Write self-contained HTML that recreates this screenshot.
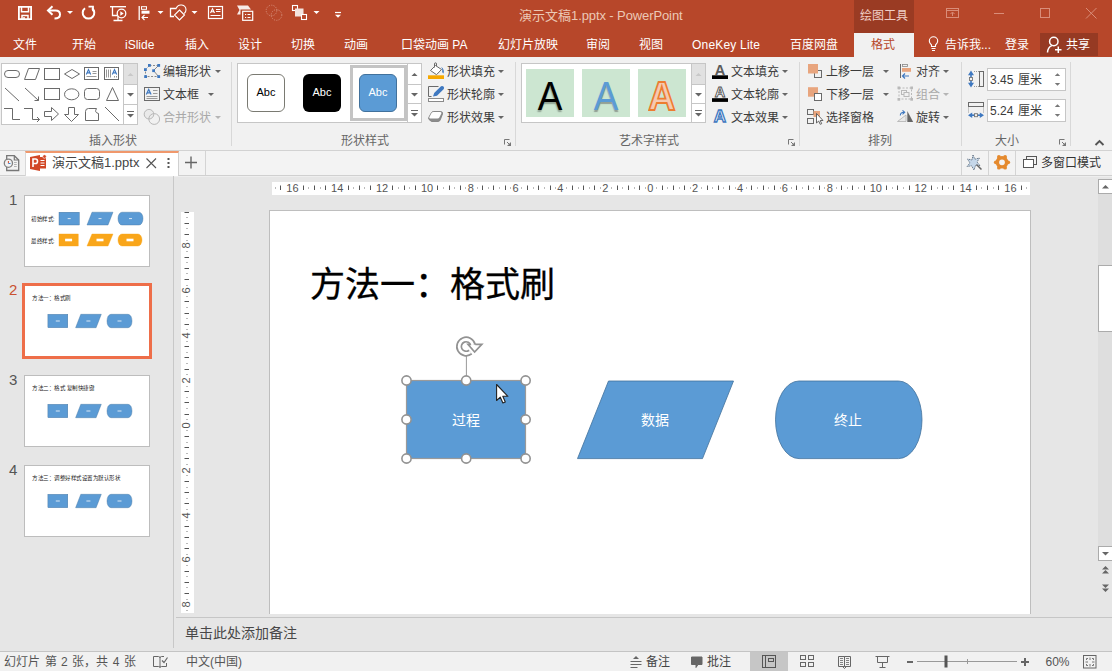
<!DOCTYPE html>
<html lang="zh-CN">
<head>
<meta charset="utf-8">
<title>演示文稿1.pptx - PowerPoint</title>
<style>
*{box-sizing:border-box;margin:0;padding:0}
html,body{width:1112px;height:671px;overflow:hidden;background:#e6e6e6;font-family:"Liberation Sans",sans-serif;font-size:13px;color:#444}
#app{position:relative;width:1112px;height:671px;overflow:hidden}
#app div,#app span,#app svg{position:absolute;white-space:nowrap}
svg{overflow:visible}
#app i{font-style:normal;display:inline-block;width:1em;text-align:center}
#titlebar{left:0;top:0;width:1112px;height:57px;background:#b7472a}
#ctx{left:854px;top:0;width:60px;height:33px;background:#9a3b23;color:#f0cfc6;font-size:12px;line-height:32px;text-align:center}
#title{left:519px;top:0;height:30px;line-height:31px;color:#ecc9b6;font-size:13px;letter-spacing:-.1px}
.tab{top:31px;height:26px;line-height:29px;color:#fff;font-size:12px}
#tabsel{left:854px;top:33px;width:60px;height:24px;padding-right:2px;background:#f1f1f1;color:#b7472a;text-align:center;line-height:25px;font-size:12px}
#share{left:1040px;top:33px;width:58px;height:23px;background:#963a23}
#ribbon{left:0;top:57px;width:1112px;height:94px;background:#f1f1f1;border-bottom:1px solid #d2d2d2}
.gl{top:133px;font-size:12px;color:#666;height:16px;line-height:16px;text-align:center}
.sep{top:62px;width:1px;height:84px;background:#d8d8d8}
.rt{font-size:12px;color:#3b3b3b;height:20px;line-height:20px}
.dis{color:#a9a9a9}
.gal{background:#fff;border:1px solid #c6c6c6}
.dd{width:0;height:0;border-left:3px solid transparent;border-right:3px solid transparent;border-top:3px solid #666}
#doctabs{left:0;top:150px;width:1112px;height:26px;background:#f3f3f3;border-bottom:1px solid #d0d0d0}
#work{left:0;top:176px;width:1112px;height:475px;background:#e6e6e6}
#status{left:0;top:651px;width:1112px;height:20px;background:#f1f1f1;border-top:1px solid #c6c6c6}
.st{top:1px;height:19px;line-height:19px;font-size:12px;color:#555}
</style>
</head>
<body>
<div id="app">
<div id="titlebar"></div>
<div id="share"></div>
<div id="ctx"><i>绘</i><i>图</i><i>工</i><i>具</i></div>
<div id="title"><i>演</i><i>示</i><i>文</i><i>稿</i>1.pptx - PowerPoint</div>
<svg style="left:0;top:0" width="1112" height="57" fill="none" stroke="#fff" stroke-width="1.3"><path d="M18.900 6.900H31.100V19.100H18.900Z" stroke-width="1.800"/><path d="M21.500 7V11.800H28.500V7" stroke-width="1.500"/><path d="M22 19V15.500H28V19" stroke-width="1.500"/><path d="M24 17V19" stroke-width="1.500"/><path d="M52.500 6.300L48 10.500L52.500 14.700" stroke-width="2"/><path d="M48.500 10.500H55.500Q60 10.500 60 14.500Q60 18.500 54.500 18.500" stroke-width="2"/><path d="M67 11H73L70 14Z" fill="#fff" stroke="none"/><path d="M92 8.200A5.800 5.800 0 1 1 85 8.200" stroke-width="2"/><path d="M88.500 6.700H93V11.200" stroke-width="1.800"/><path d="M110 6.700H126" stroke-width="1.4"/><path d="M112.500 7V15.500H117"/><path d="M118 16V20M113.500 20.500H122.500"/><circle cx="121.500" cy="13.500" r="4.300"/><path d="M120.300 11.300L123.700 13.500L120.300 15.700Z" fill="#fff" stroke="none"/><path d="M139.200 6V20"/><rect x="141.500" y="6.700" width="5" height="2.600" stroke-width="1"/><rect x="141.500" y="10.700" width="8" height="3" fill="#fff" stroke="none"/><path d="M142 17.500H148M144.500 15L142 17.500L144.500 20" stroke-width="1.1"/><path d="M157.500 11H163.500L160.500 14Z" fill="#fff" stroke="none"/><path d="M176.500 8.500H170.500V16.500H174"/><path d="M176.300 8.300A5 5 0 0 1 186 9.800A5 5 0 0 1 184.300 13.500" stroke-width="1.100"/><path d="M179.500 10L184.500 15L179.500 20L174.500 15Z" stroke-width="1.1"/><path d="M191.500 11H197.500L194.500 14Z" fill="#fff" stroke="none"/><rect x="208.500" y="6.500" width="14" height="12" stroke-width="1.2"/><path d="M216 9.500H220.500M216 11.500H220.500M210.500 15.500H220.500" stroke-width="1"/><path d="M210.500 13L212.500 8.800L214.500 13M211.300 11.700H213.700" stroke-width="1.1"/><path d="M237 5.500H248L251 9.500H240.500V14.500H237L239.500 10Z" fill="#f7ebe7" stroke="none"/><rect x="242.700" y="11.300" width="10" height="9" stroke-width="1.2"/><path d="M245 14.500H246.200M247.500 14.500H250.500M245 17.500H246.200M247.500 17.500H250.500" stroke-width="1"/><circle cx="271.500" cy="10.500" r="5.300" stroke="#d58a76" stroke-dasharray="1.200 1.200" stroke-width="1"/><circle cx="276.500" cy="15" r="5.300" stroke="#d58a76" stroke-dasharray="1.200 1.200" stroke-width="1"/><rect x="292.500" y="5.500" width="5" height="5" stroke-width="1.1"/><rect x="295" y="8.500" width="8.500" height="8" fill="#f3e3de" stroke="none"/><rect x="301.500" y="14.500" width="5" height="5" fill="#b7472a" stroke-width="1.100"/><path d="M313.500 11H319.500L316.500 14Z" fill="#fff" stroke="none"/><path d="M335 12.500H341" stroke-width="1.2"/><path d="M335 14.800H341L338 17.800Z" fill="#fff" stroke="none"/><rect x="946.500" y="8.500" width="12" height="9" stroke="#d98d79" stroke-width="1"/><path d="M946.500 10.500H958.500M952.500 16V12.500M950.500 14L952.500 12L954.500 14" stroke="#d98d79" stroke-width="1"/><path d="M994 13.500H1004" stroke="#d98d79" stroke-width="1"/><rect x="1040.500" y="8.500" width="9" height="9" stroke="#d98d79" stroke-width="1"/><path d="M1086 8L1096.500 18.500M1096.500 8L1086 18.500" stroke="#d98d79" stroke-width="1"/><path d="M931.500 46.500V45Q929.300 43.200 929.300 41A4.200 4.200 0 0 1 937.700 41Q937.700 43.200 935.500 45V46.500Z" stroke-width="1.1"/><path d="M931.500 48.500H935.500M932 50.500H935" stroke-width="1.100"/><circle cx="1053.800" cy="41.500" r="4.200" stroke-width="1.500"/><path d="M1047.500 52.500Q1047.800 47 1052 45.600" stroke-width="1.500"/><path d="M1058.300 46.500V53M1055 49.700H1061.500" stroke-width="1.500"/></svg>
<div class="tab" style="left:13px"><i>文</i><i>件</i></div>
<div class="tab" style="left:72px"><i>开</i><i>始</i></div>
<div class="tab" style="left:125px">iSlide</div>
<div class="tab" style="left:185px"><i>插</i><i>入</i></div>
<div class="tab" style="left:238px"><i>设</i><i>计</i></div>
<div class="tab" style="left:291px"><i>切</i><i>换</i></div>
<div class="tab" style="left:344px"><i>动</i><i>画</i></div>
<div class="tab" style="left:401px"><i>口</i><i>袋</i><i>动</i><i>画</i> PA</div>
<div class="tab" style="left:498px"><i>幻</i><i>灯</i><i>片</i><i>放</i><i>映</i></div>
<div class="tab" style="left:586px"><i>审</i><i>阅</i></div>
<div class="tab" style="left:639px"><i>视</i><i>图</i></div>
<div class="tab" style="left:692px"><span style="position:static;letter-spacing:.2px">OneKey Lite</span></div>
<div class="tab" style="left:790px"><i>百</i><i>度</i><i>网</i><i>盘</i></div>
<div id="tabsel"><i>格</i><i>式</i></div>
<div class="tab" style="left:945px"><i>告</i><i>诉</i><i>我</i>...</div>
<div class="tab" style="left:1005px"><i>登</i><i>录</i></div>
<div class="tab" style="left:1066px"><i>共</i><i>享</i></div>
<div id="ribbon"></div>
<div class="gal" style="left:1px;top:63px;width:137px;height:62px"></div>
<div style="left:123px;top:64px;width:14px;height:20px;background:#e1e1e1"></div>
<div style="left:123px;top:63px;width:1px;height:62px;background:#c6c6c6"></div>
<div style="left:123px;top:84px;width:15px;height:1px;background:#c6c6c6"></div>
<div style="left:123px;top:104px;width:15px;height:1px;background:#c6c6c6"></div>
<svg style="left:0;top:0" width="240" height="150" fill="none" stroke="#6a6a6a" stroke-width="1"><rect x="4.5" y="70.5" width="15" height="7" rx="3.5"/><path d="M28.5 68.5H39.5L35.5 79.5H24.5Z"/><rect x="44.5" y="68.5" width="15" height="11"/><path d="M64.5 74L72 69.5L79.5 74L72 78.5Z"/><rect x="84.5" y="67.5" width="14" height="12"/><path d="M92.5 71.5H96.5M92.5 73.5H96.5M86.500 76.5H96.5" stroke="#999"/><path d="M86.3 74.500L88.5 69.500L90.7 74.500M87.2 72.900H89.8" stroke="#3e78c0" stroke-width="1.1"/><rect x="104.5" y="67.5" width="14" height="12"/><path d="M106.5 69.5V77.5M108.5 69.5V77.5M110.5 69.5V77.5M114.5 76V77.5M116.5 76V77.5" stroke="#999"/><path d="M112.3 74.500L114.5 69.500L116.7 74.500M113.2 72.900H115.8" stroke="#3e78c0" stroke-width="1.1"/><path d="M5 88L19 101"/><path d="M25 88L38.500 100.5M34.5 100.5H38.5V96.5"/><rect x="44.5" y="88.5" width="15" height="11"/><ellipse cx="71.700" cy="94.300" rx="7.2" ry="5.5"/><rect x="84.5" y="88.5" width="15" height="11" rx="3"/><path d="M106.5 100.5L112.500 87.500L118.5 100.5Z"/><path d="M4 108.500H12.500V119.500H20"/><path d="M24 108.500H32.500V119.500H39.500M37 117L39.500 119.500L37 122"/><path d="M44.500 111.500H51.500V107.500L58.500 114L51.500 120.500V116.500H44.500Z"/><path d="M68.500 107.500H74.500V114.500H78.500L71.500 121.500L64.500 114.500H68.500Z"/><path d="M85.500 120.500V111.500Q85.500 108.500 88.500 108.500H96.500Q94 112.500 98.500 113.500V120.500Z"/><path d="M105 107L119 121"/><path d="M127.500 76L130.500 73L133.500 76Z" fill="#c8c8c8" stroke="none"/><path d="M127 93H134L130.500 96.500Z" fill="#666" stroke="none"/><path d="M127 111.500H134" stroke="#666"/><path d="M127 114H134L130.500 117.500Z" fill="#666" stroke="none"/></svg>
<svg style="left:0;top:0" width="240" height="150" fill="none"><path d="M149.500 65.500H158.500M149 66L145.500 69.500V76.500H158.500" stroke="#8a8a8a" stroke-dasharray="2 1.500"/><path d="M158.500 65.500L153.500 70.500L158.500 76.500" stroke="#8a8a8a"/><rect x="148" y="64" width="2.800" height="2.800" fill="#3e78c0"/><rect x="157.3" y="64" width="2.800" height="2.800" fill="#3e78c0"/><rect x="144" y="68.2" width="2.800" height="2.800" fill="#3e78c0"/><rect x="152.2" y="69.3" width="2.800" height="2.800" fill="#3e78c0"/><rect x="144.2" y="75.2" width="2.800" height="2.800" fill="#3e78c0"/><rect x="157.3" y="75.2" width="2.800" height="2.800" fill="#3e78c0"/><rect x="144.500" y="87.500" width="15" height="13" stroke="#6a6a6a"/><path d="M153 90.500H157.500M153 93.500H157.500M146.500 96.500H157.500M146.500 98.500H157.500" stroke="#999"/><path d="M146.300 94.500L148.700 89.500L151.100 94.500M147.200 92.800H150.200" stroke="#3e78c0" stroke-width="1.2"/><circle cx="149" cy="114.200" r="4.800" stroke="#b8b8b8" fill="#eaeaea"/><circle cx="154.200" cy="119" r="5.400" stroke="#b8b8b8" fill="none"/></svg>
<div class="rt" style="left:163px;top:62px"><i>编</i><i>辑</i><i>形</i><i>状</i></div><div class="dd" style="left:215px;top:70px"></div>
<div class="rt" style="left:163px;top:85px"><i>文</i><i>本</i><i>框</i></div><div class="dd" style="left:208px;top:93px"></div>
<div class="rt dis" style="left:163px;top:108px"><i>合</i><i>并</i><i>形</i><i>状</i></div><div class="dd" style="left:215px;top:116px;border-top-color:#b5b5b5"></div>
<div class="gl" style="left:63px;width:100px"><i>插</i><i>入</i><i>形</i><i>状</i></div>
<div class="sep" style="left:231px"></div>
<div class="gal" style="left:237px;top:63px;width:185px;height:60px"></div>
<div style="left:407px;top:63px;width:1px;height:60px;background:#c6c6c6"></div>
<div style="left:407px;top:84px;width:15px;height:1px;background:#c6c6c6"></div>
<div style="left:407px;top:103px;width:15px;height:1px;background:#c6c6c6"></div>
<div style="left:350px;top:65px;width:57px;height:56px;border:3px solid #c4c4c4;background:#fff"></div>
<div style="left:247px;top:74px;width:38px;height:38px;border:1px solid #7a7a72;border-radius:6px;background:#fff;color:#000;font-size:11px;line-height:34px;text-align:center">Abc</div>
<div style="left:303px;top:74px;width:38px;height:38px;border-radius:6px;background:#000;color:#fff;font-size:11px;line-height:36px;text-align:center">Abc</div>
<div style="left:359px;top:74px;width:38px;height:38px;border:1px solid #41719c;border-radius:6px;background:#5b9bd5;color:#fff;font-size:11px;line-height:34px;text-align:center">Abc</div>
<svg style="left:0;top:0" width="1112" height="150" fill="none"><path d="M411.500 76L414.500 73L417.500 76Z" fill="#666"/><path d="M411 93H418L414.500 96.500Z" fill="#666"/><path d="M411 110.500H418" stroke="#666"/><path d="M411 113H418L414.500 116.500Z" fill="#666"/><path d="M430.500 70.500L435.500 65.500L441.500 69.500L436.500 74.700Z" stroke="#6a6a6a" fill="#fff"/><path d="M434.500 67.500V64Q434.500 62.800 435.500 62.800Q436.500 62.800 436.500 64V66" stroke="#6a6a6a"/><path d="M441.300 67Q444.800 69.500 443.500 73.500Q441.800 73 442.300 69.800Z" fill="#3e78c0"/><rect x="428" y="75.300" width="16" height="3.700" fill="#f6a800"/><path d="M438.500 86.500H428.500V96.500H431.500" stroke="#6a6a6a"/><rect x="428.500" y="98.500" width="15" height="3" fill="#fff" stroke="#8a8a8a"/><path d="M433 96.500L434.200 93L441 86.200Q442.500 85.500 443.500 86.500Q444.500 87.500 443.800 89L437 95.800Z" fill="#3e78c0"/><path d="M429 119.500Q428 118.500 429 117L431.500 112.500Q432.200 111.500 433.500 111.500H440.500Q443 111.500 442.500 114L440.300 119.800Q439.800 121.500 438 121.500H431.500Z" fill="#8c8c8c" stroke="#7a7a7a" stroke-width="0.800"/><path d="M429.300 117.200L431.700 112.800Q432.200 112 433.500 112H440.200Q442 112 441.300 113.500L439.300 117.500Q438.800 118.500 437.500 118.500H430.300Q428.800 118.500 429.300 117.200Z" fill="#fff"/><path d="M504.500 144.500V139.500H509.500" stroke="#777"/><path d="M507 142L510 145" stroke="#777"/><path d="M511 142V146H507Z" fill="#777"/><path d="M788.500 144.500V139.500H793.500" stroke="#777"/><path d="M791 142L794 145" stroke="#777"/><path d="M795 142V146H791Z" fill="#777"/><path d="M1059.500 144.500V139.500H1064.500" stroke="#777"/><path d="M1062 142L1065 145" stroke="#777"/><path d="M1066 142V146H1062Z" fill="#777"/></svg>
<div class="rt" style="left:447px;top:62px"><i>形</i><i>状</i><i>填</i><i>充</i></div><div class="dd" style="left:498px;top:70px"></div>
<div class="rt" style="left:447px;top:85px"><i>形</i><i>状</i><i>轮</i><i>廓</i></div><div class="dd" style="left:498px;top:93px"></div>
<div class="rt" style="left:447px;top:108px"><i>形</i><i>状</i><i>效</i><i>果</i></div><div class="dd" style="left:498px;top:116px"></div>
<div class="gl" style="left:315px;width:100px"><i>形</i><i>状</i><i>样</i><i>式</i></div>
<div class="sep" style="left:515px"></div>
<div class="gal" style="left:521px;top:63px;width:185px;height:60px"></div>
<div style="left:692px;top:64px;width:13px;height:20px;background:#e1e1e1"></div>
<div style="left:691px;top:63px;width:1px;height:60px;background:#c6c6c6"></div>
<div style="left:691px;top:84px;width:15px;height:1px;background:#c6c6c6"></div>
<div style="left:691px;top:103px;width:15px;height:1px;background:#c6c6c6"></div>
<div style="left:526px;top:69px;width:48px;height:48px;background:#cce6d1"></div>
<div style="left:582px;top:69px;width:48px;height:48px;background:#cce6d1"></div>
<div style="left:638px;top:69px;width:48px;height:48px;background:#cce6d1"></div>
<div style="left:526px;top:69px;width:48px;height:48px;text-align:center;font-size:41px;line-height:54px;transform:scaleX(.9);color:#000;text-shadow:-.5px 1.5px 1.5px rgba(0,0,0,.3)">A</div>
<div style="left:582px;top:69px;width:48px;height:48px;text-align:center;font-size:41px;line-height:54px;transform:scaleX(.9);color:#5b9bd5;text-shadow:0 1.5px 1px rgba(90,90,90,.5)">A</div>
<div style="left:638px;top:69px;width:48px;height:48px;text-align:center;font-size:41px;line-height:54px;transform:scaleX(.92);font-weight:bold;color:#f6c9b0;-webkit-text-stroke:1.800px #ed7d31">A</div>
<svg style="left:0;top:0" width="1112" height="150" fill="none"><path d="M695.500 76L698.500 73L701.500 76Z" fill="#c8c8c8"/><path d="M695 93H702L698.500 96.500Z" fill="#666"/><path d="M695 110.500H702" stroke="#666"/><path d="M695 113H702L698.500 116.500Z" fill="#666"/><text x="720" y="75" text-anchor="middle" font-size="14.500" font-weight="bold" fill="#5c5c5c">A</text><rect x="712" y="75.300" width="16" height="3.700" fill="#000"/><text x="720" y="97" text-anchor="middle" font-size="14.500" font-weight="bold" fill="#fff" stroke="#555" stroke-width=".9">A</text><rect x="712" y="98.200" width="16" height="3.700" fill="#000"/><text x="720" y="122.300" text-anchor="middle" font-size="17" font-weight="bold" fill="#fff" stroke="#3e78c0" stroke-width="1.300">A</text></svg>
<div class="rt" style="left:731px;top:62px"><i>文</i><i>本</i><i>填</i><i>充</i></div><div class="dd" style="left:782px;top:70px"></div>
<div class="rt" style="left:731px;top:85px"><i>文</i><i>本</i><i>轮</i><i>廓</i></div><div class="dd" style="left:782px;top:93px"></div>
<div class="rt" style="left:731px;top:108px"><i>文</i><i>本</i><i>效</i><i>果</i></div><div class="dd" style="left:782px;top:116px"></div>
<div class="gl" style="left:599px;width:100px"><i>艺</i><i>术</i><i>字</i><i>样</i><i>式</i></div>
<div class="sep" style="left:799px"></div>
<div style="left:987px;top:68px;width:79px;height:23px;background:#fff;border:1px solid #c6c6c6"></div>
<div style="left:987px;top:99px;width:79px;height:23px;background:#fff;border:1px solid #c6c6c6"></div>
<svg style="left:0;top:0" width="1112" height="150" fill="none"><rect x="814.500" y="70.500" width="7" height="7" stroke="#6a6a6a" fill="#f1f1f1"/><rect x="808" y="64" width="10" height="9.500" fill="#e8a57e"/><rect x="808" y="87.200" width="10" height="9.500" fill="#e8a57e"/><rect x="814.500" y="93.500" width="7" height="7" stroke="#6a6a6a" fill="#fff"/><rect x="807.500" y="109.500" width="6" height="5" stroke="#6a6a6a"/><rect x="807.500" y="118.500" width="6" height="5" stroke="#6a6a6a"/><rect x="813.500" y="111" width="6.500" height="6" fill="#e8a57e"/><path d="M816.500 113.500V123L818.700 121L820.200 124.300L821.700 123.700L820.200 120.500H823Z" fill="#fff" stroke="#555" stroke-width="0.900"/><path d="M900.500 64V78" stroke="#6a6a6a"/><rect x="902.500" y="64.500" width="5" height="2" stroke="#888" stroke-width=".8"/><rect x="902" y="68" width="9" height="3.800" fill="#e8a57e"/><path d="M902.500 76H909M905 73.500L902.500 76L905 78.500" stroke="#3e78c0" stroke-width="1.200"/><rect x="899" y="88" width="12.500" height="11" stroke="#b9b9b9" stroke-dasharray="2 1.500"/><rect x="901.500" y="90.500" width="5" height="4" stroke="#b9b9b9"/><rect x="904" y="92.500" width="5" height="4" stroke="#b9b9b9" fill="#f1f1f1"/><rect x="897.5" y="86.5" width="2.700" height="2.700" fill="#b9b9b9"/><rect x="910.3" y="86.5" width="2.700" height="2.700" fill="#b9b9b9"/><rect x="897.5" y="98" width="2.700" height="2.700" fill="#b9b9b9"/><rect x="910.3" y="98" width="2.700" height="2.700" fill="#b9b9b9"/><path d="M906 115L906 121.500H897.500Z" stroke="#b0b0b0" fill="#e9e9e9" stroke-width=".8"/><path d="M907.300 111L913.200 122H907.300Z" fill="#666"/><path d="M900.300 115.500Q900.300 112.500 904 112.300M902.500 110.300L904.700 112.300L902.500 114.300" stroke="#3e78c0" stroke-width="1.100"/><rect x="979.500" y="71.500" width="4" height="15" stroke="#6a6a6a"/><path d="M974 71.500H979M974 86.500H979" stroke="#999" stroke-dasharray="1 1"/><path d="M968 75.200L971 70.600L974 75.200ZM968 82.800L971 87.400L974 82.800Z" fill="#3e78c0"/><path d="M971 75V83" stroke="#3e78c0" stroke-width="1.600"/><rect x="969.500" y="77.500" width="3" height="3" fill="#f1f1f1" stroke="#777" stroke-width=".9"/><rect x="968.500" y="102.500" width="15" height="4" stroke="#6a6a6a"/><path d="M968.500 107.500V112.500M983.500 107.500V112.500" stroke="#999" stroke-dasharray="1 1"/><path d="M972.200 112.500L968 115.200L972.200 118ZM979.800 112.500L984 115.200L979.800 118Z" fill="#3e78c0"/><path d="M972 115.200H980" stroke="#3e78c0" stroke-width="1.600"/><rect x="974.500" y="113.700" width="3" height="3" fill="#f1f1f1" stroke="#777" stroke-width=".9"/><path d="M1054.800 76.1H1060.200L1057.500 73.3Z" fill="#777"/><path d="M1054.800 83.0H1060.200L1057.500 85.8Z" fill="#777"/><path d="M1054.800 107.1H1060.200L1057.500 104.3Z" fill="#777"/><path d="M1054.800 114.0H1060.200L1057.500 116.8Z" fill="#777"/><path d="M1095.500 145L1099.500 141L1103.500 145" stroke="#555" stroke-width="1.900"/></svg>
<div class="rt" style="left:826px;top:62px"><i>上</i><i>移</i><i>一</i><i>层</i></div>
<div class="rt" style="left:826px;top:85px"><i>下</i><i>移</i><i>一</i><i>层</i></div>
<div class="rt" style="left:826px;top:108px"><i>选</i><i>择</i><i>窗</i><i>格</i></div>
<div class="dd" style="left:883px;top:70px"></div><div class="dd" style="left:883px;top:93px"></div>
<div class="rt" style="left:916px;top:62px"><i>对</i><i>齐</i></div><div class="dd" style="left:943px;top:70px"></div>
<div class="rt dis" style="left:916px;top:85px"><i>组</i><i>合</i></div><div class="dd" style="left:943px;top:93px;border-top-color:#b5b5b5"></div>
<div class="rt" style="left:916px;top:108px"><i>旋</i><i>转</i></div><div class="dd" style="left:943px;top:116px"></div>
<div class="gl" style="left:830px;width:100px"><i>排</i><i>列</i></div>
<div class="sep" style="left:961px"></div>
<div class="rt" style="left:990px;top:70px;word-spacing:1px">3.45 <i>厘</i><i>米</i></div>
<div class="rt" style="left:990px;top:101px;word-spacing:1px">5.24 <i>厘</i><i>米</i></div>
<div class="gl" style="left:957px;width:100px"><i>大</i><i>小</i></div>
<div class="sep" style="left:1070px"></div>
<div style="left:0;top:151px;width:1112px;height:25px;background:#f3f3f3;border-bottom:1px solid #d0d0d0"></div>
<div style="left:25px;top:151px;width:154px;height:25px;background:#fff;border-top:2px solid #f0986c;border-right:1px solid #d0d0d0;border-left:1px solid #d8d8d8"></div>
<div style="left:205px;top:151px;width:1px;height:24px;background:#d4d4d4"></div>
<div style="left:961px;top:151px;width:1px;height:24px;background:#d4d4d4"></div>
<div style="left:988px;top:151px;width:1px;height:24px;background:#d4d4d4"></div>
<div style="left:1015px;top:151px;width:1px;height:24px;background:#d4d4d4"></div>
<div style="left:52px;top:153px;height:20px;line-height:20px;font-size:13px;color:#444"><i>演</i><i>示</i><i>文</i><i>稿</i>1.pptx</div>
<div style="left:1041px;top:153px;height:20px;line-height:21px;font-size:12px;color:#333"><i>多</i><i>窗</i><i>口</i><i>模</i><i>式</i></div>
<svg style="left:0;top:0" width="1112" height="180" fill="none"><path d="M6.700 159.500V155.700H14.300L18.700 160V170.500H6.700V167" stroke="#777" stroke-width="1.300"/><path d="M14.300 155.700V160H18.700" stroke="#777" stroke-width="1.200"/><path d="M14 162.500H16.800M14 164.500H16.800M14 166.500H16.800" stroke="#b5b5b5"/><circle cx="8.400" cy="163.200" r="4.100" fill="#f3f3f3" stroke="#808080" stroke-width="1.300"/><path d="M8.400 161V163.500" stroke="#d8502d" stroke-width="1"/><path d="M8.400 163.500H10.500" stroke="#3e8ad8" stroke-width="1"/><rect x="37" y="157" width="9" height="11.500" fill="#d24726"/><path d="M30 157L40 155V171L30 169Z" fill="#d24726"/><path d="M40.500 160.500H44.500M40.500 163H44.500M40.500 165.500H44.500" stroke="#fff" stroke-width="1"/><path d="M33 167V159H35.500Q37.500 159 37.500 161.200Q37.500 163.500 35.500 163.500H33" stroke="#fff" stroke-width="1.600"/><circle cx="44.500" cy="156.500" r="1.800" fill="#d24726" stroke="#fff" stroke-width=".6"/><path d="M146.500 158.500L156 168M156 158.500L146.500 168" stroke="#555" stroke-width="1.100"/><rect x="167.500" y="158" width="2" height="2" fill="#555"/><rect x="167.500" y="162" width="2" height="2" fill="#555"/><rect x="167.500" y="166" width="2" height="2" fill="#555"/><path d="M185 162.500H197M191 156.500V168.500" stroke="#666" stroke-width="1.400"/><path d="M973 155L974.800 159.200L979.500 158L977 162L980 165.500L975.500 165.500L974 170L971.500 165.800L967 166.500L970 163L967.500 159L972 160Z" fill="#c5d7ea" stroke="#5f6f80" stroke-width=".9" stroke-dasharray="1.500 .8"/><path d="M976.500 164.500L981.500 169.500" stroke="#666" stroke-width="1.500"/><circle cx="1002" cy="162.300" r="4.600" stroke="#e58a2e" stroke-width="3.400"/><circle cx="1008.2" cy="162.3" r="1.900" fill="#e58a2e"/><circle cx="1005.1" cy="167.7" r="1.900" fill="#e58a2e"/><circle cx="998.9" cy="167.7" r="1.900" fill="#e58a2e"/><circle cx="995.8" cy="162.3" r="1.900" fill="#e58a2e"/><circle cx="998.9" cy="156.9" r="1.900" fill="#e58a2e"/><circle cx="1005.1" cy="156.9" r="1.900" fill="#e58a2e"/><rect x="1026.500" y="156.500" width="10" height="8" fill="#f3f3f3" stroke="#555"/><rect x="1023.500" y="159.500" width="10" height="8" fill="#fff" stroke="#555"/></svg>
<div style="left:0;top:176px;width:1112px;height:1px;background:#eeeeee"></div>
<div style="left:173px;top:176px;width:1px;height:472px;background:#c8c8c8"></div>
<div style="left:24px;top:195px;width:126px;height:72px;background:#fff;border:1px solid #bdbdbd"></div>
<div style="left:9px;top:189.7px;font-size:15px;line-height:20px;color:#555">1</div>
<div style="left:22px;top:283px;width:130px;height:76px;background:#fff;border:3px solid #ee6e49"></div>
<div style="left:9px;top:279.7px;font-size:15px;line-height:20px;color:#c9502f">2</div>
<div style="left:24px;top:375px;width:126px;height:72px;background:#fff;border:1px solid #bdbdbd"></div>
<div style="left:9px;top:369.7px;font-size:15px;line-height:20px;color:#555">3</div>
<div style="left:24px;top:465px;width:126px;height:72px;background:#fff;border:1px solid #bdbdbd"></div>
<div style="left:9px;top:459.7px;font-size:15px;line-height:20px;color:#555">4</div>
<div style="left:31px;top:216px;font-size:12px;line-height:12px;height:12px;color:#222;transform:scale(.46);transform-origin:0 0"><i>初</i><i>始</i><i>样</i><i>式</i>:</div>
<div style="left:31px;top:237.5px;font-size:12px;line-height:12px;height:12px;color:#222;transform:scale(.46);transform-origin:0 0"><i>最</i><i>终</i><i>样</i><i>式</i>:</div>
<div style="left:32px;top:294.8px;font-size:12px;line-height:12px;height:12px;color:#222;transform:scale(.46);transform-origin:0 0"><i>方</i><i>法</i><i>一</i><i>：</i><i>格</i><i>式</i><i>刷</i></div>
<div style="left:32px;top:384.8px;font-size:12px;line-height:12px;height:12px;color:#222;transform:scale(.46);transform-origin:0 0"><i>方</i><i>法</i><i>二</i><i>：</i><i>格</i><i>式</i> <i>复</i><i>制</i><i>快</i><i>捷</i><i>键</i></div>
<div style="left:32px;top:474.8px;font-size:12px;line-height:12px;height:12px;color:#222;transform:scale(.46);transform-origin:0 0"><i>方</i><i>法</i><i>三</i><i>：</i><i>调</i><i>整</i><i>好</i><i>样</i><i>式</i><i>设</i><i>置</i><i>为</i><i>默</i><i>认</i><i>形</i><i>状</i></div>
<svg style="left:0;top:0" width="180" height="671" fill="none"><rect x="59" y="212.2" width="20.3" height="12.8" fill="#5b9bd5" stroke="#41719c" stroke-width=".4"/><path d="M87 225.0L92 212.2H113L108 225.0Z" fill="#5b9bd5" stroke="#41719c" stroke-width=".4"/><path d="M122 212.2H139A4 6.4 0 0 1 139 225.0H122A4 6.4 0 0 1 122 212.2Z" fill="#5b9bd5" stroke="#41719c" stroke-width=".4"/><rect x="59" y="234" width="19.2" height="12" fill="#f9a61a" stroke="#f9a61a" stroke-width=".4"/><path d="M87 246L92 234H113L108 246Z" fill="#f9a61a" stroke="#f9a61a" stroke-width=".4"/><path d="M122 234H138A4 6.0 0 0 1 138 246H122A4 6.0 0 0 1 122 234Z" fill="#f9a61a" stroke="#f9a61a" stroke-width=".4"/><path d="M67.7 218.600H70.7" stroke="#dbe8f5" stroke-width="1"/><path d="M98.5 218.600H101.5" stroke="#dbe8f5" stroke-width="1"/><path d="M129.0 218.600H132.0" stroke="#dbe8f5" stroke-width="1"/><path d="M65.1 240H72.1" stroke="#fff" stroke-width="2.600"/><path d="M96.5 240H103.5" stroke="#fff" stroke-width="2.600"/><path d="M126.5 240H133.5" stroke="#fff" stroke-width="2.600"/><rect x="47.9" y="314.3" width="19.9" height="13.4" fill="#5b9bd5" stroke="#41719c" stroke-width=".4"/><path d="M75.6 327.7L80.8 314.3H101.3L96.1 327.7Z" fill="#5b9bd5" stroke="#41719c" stroke-width=".4"/><path d="M111 314.3H128A4 6.700 0 0 1 128 327.7H111A4 6.700 0 0 1 111 314.3Z" fill="#5b9bd5" stroke="#41719c" stroke-width=".4"/><path d="M55.8 321.0H59.8" stroke="#dbe8f5" stroke-width="1"/><path d="M86.4 321.0H90.4" stroke="#dbe8f5" stroke-width="1"/><path d="M117.5 321.0H121.5" stroke="#dbe8f5" stroke-width="1"/><rect x="47.9" y="404.3" width="19.9" height="13.4" fill="#5b9bd5" stroke="#41719c" stroke-width=".4"/><path d="M75.6 417.7L80.8 404.3H101.3L96.1 417.7Z" fill="#5b9bd5" stroke="#41719c" stroke-width=".4"/><path d="M111 404.3H128A4 6.700 0 0 1 128 417.7H111A4 6.700 0 0 1 111 404.3Z" fill="#5b9bd5" stroke="#41719c" stroke-width=".4"/><path d="M55.8 411.0H59.8" stroke="#dbe8f5" stroke-width="1"/><path d="M86.4 411.0H90.4" stroke="#dbe8f5" stroke-width="1"/><path d="M117.5 411.0H121.5" stroke="#dbe8f5" stroke-width="1"/><rect x="47.9" y="494.3" width="19.9" height="13.4" fill="#5b9bd5" stroke="#41719c" stroke-width=".4"/><path d="M75.6 507.7L80.8 494.3H101.3L96.1 507.7Z" fill="#5b9bd5" stroke="#41719c" stroke-width=".4"/><path d="M111 494.3H128A4 6.700 0 0 1 128 507.7H111A4 6.700 0 0 1 111 494.3Z" fill="#5b9bd5" stroke="#41719c" stroke-width=".4"/><path d="M55.8 501.0H59.8" stroke="#dbe8f5" stroke-width="1"/><path d="M86.4 501.0H90.4" stroke="#dbe8f5" stroke-width="1"/><path d="M117.5 501.0H121.5" stroke="#dbe8f5" stroke-width="1"/></svg>
<div style="left:272px;top:182px;width:758px;height:13px;background:#fff"></div>
<div style="left:181px;top:212px;width:13px;height:401px;background:#fff"></div>
<svg style="left:0;top:0" width="1112" height="671" fill="none"><path d="M280.5 185.500V190M303.5 185.500V190M314.5 185.500V190M325.5 185.500V190M348.5 185.500V190M359.5 185.500V190M370.5 185.500V190M392.5 185.500V190M404.5 185.500V190M415.5 185.500V190M437.5 185.500V190M449.5 185.500V190M460.5 185.500V190M482.5 185.500V190M493.5 185.500V190M505.5 185.500V190M527.5 185.500V190M538.5 185.500V190M550.5 185.500V190M572.5 185.500V190M583.5 185.500V190M594.5 185.500V190M617.5 185.500V190M628.5 185.500V190M639.5 185.500V190M662.5 185.500V190M673.5 185.500V190M684.5 185.500V190M707.5 185.500V190M718.5 185.500V190M729.5 185.500V190M751.5 185.500V190M763.5 185.500V190M774.5 185.500V190M796.5 185.500V190M808.5 185.500V190M819.5 185.500V190M841.5 185.500V190M852.5 185.500V190M864.5 185.500V190M886.5 185.500V190M897.5 185.500V190M909.5 185.500V190M931.5 185.500V190M942.5 185.500V190M953.5 185.500V190M976.5 185.500V190M987.5 185.500V190M998.5 185.500V190M1021.5 185.500V190M184.500 212.5H189M184.500 223.5H189M184.500 234.5H189M184.500 257.5H189M184.500 268.5H189M184.500 279.5H189M184.500 301.5H189M184.500 313.5H189M184.500 324.5H189M184.500 346.5H189M184.500 357.5H189M184.500 369.5H189M184.500 391.5H189M184.500 402.5H189M184.500 414.5H189M184.500 436.5H189M184.500 447.5H189M184.500 458.5H189M184.500 481.5H189M184.500 492.5H189M184.500 503.5H189M184.500 526.5H189M184.500 537.5H189M184.500 548.5H189M184.500 571.5H189M184.500 582.5H189M184.500 593.5H189" stroke="#555" stroke-width="1"/><path d="M275.5 187.500V188.500M286.5 187.500V188.500M297.5 187.500V188.500M308.5 187.500V188.500M320.5 187.500V188.500M331.5 187.500V188.500M342.5 187.500V188.500M353.5 187.500V188.500M364.5 187.500V188.500M376.5 187.500V188.500M387.5 187.500V188.500M398.5 187.500V188.500M409.5 187.500V188.500M420.5 187.500V188.500M432.5 187.500V188.500M443.5 187.500V188.500M454.5 187.500V188.500M465.5 187.500V188.500M477.5 187.500V188.500M488.5 187.500V188.500M499.5 187.500V188.500M510.5 187.500V188.500M521.5 187.500V188.500M533.5 187.500V188.500M544.5 187.500V188.500M555.5 187.500V188.500M566.5 187.500V188.500M578.5 187.500V188.500M589.5 187.500V188.500M600.5 187.500V188.500M611.5 187.500V188.500M622.5 187.500V188.500M634.5 187.500V188.500M645.5 187.500V188.500M656.5 187.500V188.500M667.5 187.500V188.500M679.5 187.500V188.500M690.5 187.500V188.500M701.5 187.500V188.500M712.5 187.500V188.500M723.5 187.500V188.500M735.5 187.500V188.500M746.5 187.500V188.500M757.5 187.500V188.500M768.5 187.500V188.500M780.5 187.500V188.500M791.5 187.500V188.500M802.5 187.500V188.500M813.5 187.500V188.500M824.5 187.500V188.500M836.5 187.500V188.500M847.5 187.500V188.500M858.5 187.500V188.500M869.5 187.500V188.500M881.5 187.500V188.500M892.5 187.500V188.500M903.5 187.500V188.500M914.5 187.500V188.500M925.5 187.500V188.500M937.5 187.500V188.500M948.5 187.500V188.500M959.5 187.500V188.500M970.5 187.500V188.500M981.5 187.500V188.500M993.5 187.500V188.500M1004.5 187.500V188.500M1015.5 187.500V188.500M1026.5 187.500V188.500M186.500 217.5H187.500M186.500 228.5H187.500M186.500 240.5H187.500M186.500 251.5H187.500M186.500 262.5H187.500M186.500 273.5H187.500M186.500 285.5H187.500M186.500 296.5H187.500M186.500 307.5H187.500M186.500 318.5H187.500M186.500 329.5H187.500M186.500 341.5H187.500M186.500 352.5H187.500M186.500 363.5H187.500M186.500 374.5H187.500M186.500 386.5H187.500M186.500 397.5H187.500M186.500 408.5H187.500M186.500 419.5H187.500M186.500 430.5H187.500M186.500 442.5H187.500M186.500 453.5H187.500M186.500 464.5H187.500M186.500 475.5H187.500M186.500 487.5H187.500M186.500 498.5H187.500M186.500 509.5H187.500M186.500 520.5H187.500M186.500 531.5H187.500M186.500 543.5H187.500M186.500 554.5H187.500M186.500 565.5H187.500M186.500 576.5H187.500M186.500 587.5H187.500M186.500 599.5H187.500M186.500 610.5H187.500" stroke="#777" stroke-width="1"/></svg>
<div style="left:281.2px;top:182px;width:20px;height:13px;line-height:13px;text-align:center;font-size:11px;color:#555;background:#fff;width:14px;left:285.4px">16</div>
<div style="left:326.0px;top:182px;width:20px;height:13px;line-height:13px;text-align:center;font-size:11px;color:#555;background:#fff;width:14px;left:330.2px">14</div>
<div style="left:370.9px;top:182px;width:20px;height:13px;line-height:13px;text-align:center;font-size:11px;color:#555;background:#fff;width:14px;left:375.1px">12</div>
<div style="left:415.8px;top:182px;width:20px;height:13px;line-height:13px;text-align:center;font-size:11px;color:#555;background:#fff;width:14px;left:420.0px">10</div>
<div style="left:460.7px;top:182px;width:20px;height:13px;line-height:13px;text-align:center;font-size:11px;color:#555;background:#fff;width:8px;left:466.7px">8</div>
<div style="left:505.6px;top:182px;width:20px;height:13px;line-height:13px;text-align:center;font-size:11px;color:#555;background:#fff;width:8px;left:511.6px">6</div>
<div style="left:550.4px;top:182px;width:20px;height:13px;line-height:13px;text-align:center;font-size:11px;color:#555;background:#fff;width:8px;left:556.4px">4</div>
<div style="left:595.3px;top:182px;width:20px;height:13px;line-height:13px;text-align:center;font-size:11px;color:#555;background:#fff;width:8px;left:601.3px">2</div>
<div style="left:640.2px;top:182px;width:20px;height:13px;line-height:13px;text-align:center;font-size:11px;color:#555;background:#fff;width:8px;left:646.2px">0</div>
<div style="left:685.1px;top:182px;width:20px;height:13px;line-height:13px;text-align:center;font-size:11px;color:#555;background:#fff;width:8px;left:691.1px">2</div>
<div style="left:730.0px;top:182px;width:20px;height:13px;line-height:13px;text-align:center;font-size:11px;color:#555;background:#fff;width:8px;left:736.0px">4</div>
<div style="left:774.8px;top:182px;width:20px;height:13px;line-height:13px;text-align:center;font-size:11px;color:#555;background:#fff;width:8px;left:780.8px">6</div>
<div style="left:819.7px;top:182px;width:20px;height:13px;line-height:13px;text-align:center;font-size:11px;color:#555;background:#fff;width:8px;left:825.7px">8</div>
<div style="left:864.6px;top:182px;width:20px;height:13px;line-height:13px;text-align:center;font-size:11px;color:#555;background:#fff;width:14px;left:868.8px">10</div>
<div style="left:909.5px;top:182px;width:20px;height:13px;line-height:13px;text-align:center;font-size:11px;color:#555;background:#fff;width:14px;left:913.7px">12</div>
<div style="left:954.4px;top:182px;width:20px;height:13px;line-height:13px;text-align:center;font-size:11px;color:#555;background:#fff;width:14px;left:958.6px">14</div>
<div style="left:999.2px;top:182px;width:20px;height:13px;line-height:13px;text-align:center;font-size:11px;color:#555;background:#fff;width:14px;left:1003.4px">16</div>
<div style="left:181px;top:242.6px;width:13px;height:8px;background:#fff"></div><div style="left:176px;top:239.3px;width:20px;height:13px;line-height:13px;text-align:center;font-size:11px;color:#555;transform:rotate(-90deg)">8</div>
<div style="left:181px;top:287.5px;width:13px;height:8px;background:#fff"></div><div style="left:176px;top:284.2px;width:20px;height:13px;line-height:13px;text-align:center;font-size:11px;color:#555;transform:rotate(-90deg)">6</div>
<div style="left:181px;top:332.3px;width:13px;height:8px;background:#fff"></div><div style="left:176px;top:329.0px;width:20px;height:13px;line-height:13px;text-align:center;font-size:11px;color:#555;transform:rotate(-90deg)">4</div>
<div style="left:181px;top:377.2px;width:13px;height:8px;background:#fff"></div><div style="left:176px;top:373.9px;width:20px;height:13px;line-height:13px;text-align:center;font-size:11px;color:#555;transform:rotate(-90deg)">2</div>
<div style="left:181px;top:422.1px;width:13px;height:8px;background:#fff"></div><div style="left:176px;top:418.8px;width:20px;height:13px;line-height:13px;text-align:center;font-size:11px;color:#555;transform:rotate(-90deg)">0</div>
<div style="left:181px;top:467.0px;width:13px;height:8px;background:#fff"></div><div style="left:176px;top:463.7px;width:20px;height:13px;line-height:13px;text-align:center;font-size:11px;color:#555;transform:rotate(-90deg)">2</div>
<div style="left:181px;top:511.9px;width:13px;height:8px;background:#fff"></div><div style="left:176px;top:508.6px;width:20px;height:13px;line-height:13px;text-align:center;font-size:11px;color:#555;transform:rotate(-90deg)">4</div>
<div style="left:181px;top:556.7px;width:13px;height:8px;background:#fff"></div><div style="left:176px;top:553.4px;width:20px;height:13px;line-height:13px;text-align:center;font-size:11px;color:#555;transform:rotate(-90deg)">6</div>
<div style="left:181px;top:601.6px;width:13px;height:8px;background:#fff"></div><div style="left:176px;top:598.3px;width:20px;height:13px;line-height:13px;text-align:center;font-size:11px;color:#555;transform:rotate(-90deg)">8</div>
<div style="left:269px;top:210px;width:762px;height:404px;background:#fff;border:1px solid #bebebe;border-bottom:none"></div>
<div style="left:310px;top:261px;font-size:35px;line-height:48px;height:48px;color:#000;-webkit-text-stroke:.3px #000"><i>方</i><i>法</i><i>一</i><i>：</i><i>格</i><i>式</i><i>刷</i></div>
<svg style="left:0;top:0" width="1112" height="671" fill="none"><rect x="406.500" y="380.500" width="119" height="78" fill="#5b9bd5" stroke="#9a9a9a" stroke-width="1.200"/><path d="M577.500 458.600L608.500 381H733.500L702.500 458.600Z" fill="#5b9bd5" stroke="#41719c" stroke-width=".8"/><path d="M799 381H898.500A23.500 38.800 0 0 1 898.500 458.600H799A23.500 38.800 0 0 1 799 381Z" fill="#5b9bd5" stroke="#41719c" stroke-width=".8"/><path d="M466.400 356V376" stroke="#9a9a9a" stroke-width="1"/><path d="M472.89 344.81A7.0 7.0 0 1 0 470.41 352.02" stroke="#929292" stroke-width="6.200"/><path d="M468 344.400H481.800L474.600 352Z" fill="#fff" stroke="#929292" stroke-width="1.700" stroke-linejoin="miter"/><path d="M472.89 344.81A7.0 7.0 0 1 0 470.41 352.02" stroke="#fff" stroke-width="2.800"/><path d="M471.200 345.800H475.300" stroke="#fff" stroke-width="2.200"/><circle cx="406.5" cy="380.5" r="4.600" fill="#fff" stroke="#929292" stroke-width="1.600"/><circle cx="466.2" cy="380.5" r="4.600" fill="#fff" stroke="#929292" stroke-width="1.600"/><circle cx="525.6" cy="380.5" r="4.600" fill="#fff" stroke="#929292" stroke-width="1.600"/><circle cx="406.5" cy="419.5" r="4.600" fill="#fff" stroke="#929292" stroke-width="1.600"/><circle cx="525.6" cy="419.5" r="4.600" fill="#fff" stroke="#929292" stroke-width="1.600"/><circle cx="406.5" cy="458.5" r="4.600" fill="#fff" stroke="#929292" stroke-width="1.600"/><circle cx="466.2" cy="458.5" r="4.600" fill="#fff" stroke="#929292" stroke-width="1.600"/><circle cx="525.6" cy="458.5" r="4.600" fill="#fff" stroke="#929292" stroke-width="1.600"/><path d="M496.600 384.500V400.500L500.300 397.200L502.900 403L505.300 402L502.800 396.300H507.900Z" fill="#fff" stroke="#222" stroke-width="1.100" stroke-linejoin="round"/></svg>
<div style="left:436.3px;top:410px;width:60px;height:20px;line-height:20px;text-align:center;font-size:14px;color:#fff"><i>过</i><i>程</i></div>
<div style="left:624.5px;top:410px;width:60px;height:20px;line-height:20px;text-align:center;font-size:14px;color:#fff"><i>数</i><i>据</i></div>
<div style="left:817.5px;top:410px;width:60px;height:20px;line-height:20px;text-align:center;font-size:14px;color:#fff"><i>终</i><i>止</i></div>
<div style="left:1098px;top:179px;width:14px;height:381px;background:#dedede"></div>
<div style="left:1098px;top:179px;width:15px;height:15px;background:#fff;border:1px solid #ababab"></div>
<div style="left:1098px;top:546px;width:15px;height:15px;background:#fff;border:1px solid #ababab"></div>
<div style="left:1098px;top:265px;width:15px;height:67px;background:#fff;border:1px solid #ababab"></div>
<svg style="left:0;top:0" width="1112" height="671" fill="none"><path d="M1102 188.500H1109L1105.500 185Z" fill="#666"/><path d="M1102 552H1109L1105.500 555.500Z" fill="#666"/><path d="M1102 569.500H1109L1105.500 566ZM1102 573.500H1109L1105.500 570Z" fill="#666"/><path d="M1102 568H1109" stroke="#666" stroke-width="0"/><path d="M1102 584.500H1109L1105.500 588ZM1102 588.500H1109L1105.500 592Z" fill="#666"/></svg>
<div style="left:176px;top:617px;width:936px;height:1px;background:#c6c6c6"></div>
<div style="left:185px;top:623px;height:20px;line-height:20px;font-size:14px;color:#484848"><i>单</i><i>击</i><i>此</i><i>处</i><i>添</i><i>加</i><i>备</i><i>注</i></div>
<div style="left:0;top:651px;width:1112px;height:20px;background:#f1f1f1;border-top:1px solid #c4c4c4"></div>
<div style="left:750px;top:652px;width:38px;height:19px;background:#c6c6c6"></div>
<div class="st" style="left:4px;top:653px;word-spacing:1.2px"><i>幻</i><i>灯</i><i>片</i> <i>第</i> 2 <i>张</i><i>，</i><i>共</i> 4 <i>张</i></div>
<div class="st" style="left:186px;top:653px"><i>中</i><i>文</i>(<i>中</i><i>国</i>)</div>
<div class="st" style="left:646px;top:653px;color:#444"><i>备</i><i>注</i></div>
<div class="st" style="left:707px;top:653px;color:#444"><i>批</i><i>注</i></div>
<div class="st" style="left:1045.500px;top:653px;font-size:12px">60%</div>
<svg style="left:0;top:0" width="1112" height="671" fill="none" stroke="#666" stroke-width="1"><path d="M153.500 656.500H158.500Q160 656.500 160 658V667.500Q160 666.500 158.500 666.500H153.500Z"/><path d="M160 658Q160 656.500 161.500 656.500H164M160 667.500Q160 666.500 161.500 666.500H166.500V663"/><path d="M162 660.500L164 662.500L167.500 657.500" stroke-width="1.200"/><path d="M630.500 661.500H641.500M630.500 664.500H641.500M630.500 667.500H637.500"/><path d="M633 659L636 656L639 659Z" fill="#666" stroke="none"/><path d="M691.500 657H702V664.500H698L696 667.500V664.500H691.500Z" fill="#666"/><rect x="762.500" y="655.500" width="13" height="12" stroke="#555"/><path d="M765.500 656V667" stroke="#555"/><rect x="768.500" y="658.500" width="5" height="3" stroke="#555"/><rect x="800.5" y="655.5" width="5" height="4"/><rect x="808.5" y="655.5" width="5" height="4"/><rect x="800.5" y="662.5" width="5" height="4"/><rect x="808.5" y="662.5" width="5" height="4"/><path d="M838.500 656.500H844.500V666.500H838.500ZM844.500 656.500H850.500V666.500H844.500Z"/><path d="M840 658.500H843M840 660.500H843M840 662.500H843M840 664.500H843M846 658.500H849M846 660.500H849M846 662.500H849M846 664.500H849" stroke-width=".8"/><path d="M843 667L844.500 668.500L846 667" /><path d="M875.500 656.500H889.500"/><path d="M877.500 657V662.500H887.500V657"/><path d="M882.500 663V667M879.500 667.500H885.500"/><path d="M907 662H913" stroke-width="2"/><path d="M917 661.500H1017" stroke="#999"/><path d="M967.500 659V664" stroke="#999"/><rect x="944.500" y="655.500" width="3" height="12" fill="#555" stroke="none"/><path d="M1021 662H1029M1025 658V666" stroke-width="2"/><rect x="1083.500" y="655.500" width="12.500" height="12.500"/><path d="M1086.500 660V658.500H1088M1092 658.500H1093.500V660M1086.500 664V665.500H1088M1092 665.500H1093.500V664M1090 657.500V660M1090 664V666.500M1085.500 662H1088M1092 662H1094.500" stroke-width=".9"/></svg>
</div>
</body>
</html>
